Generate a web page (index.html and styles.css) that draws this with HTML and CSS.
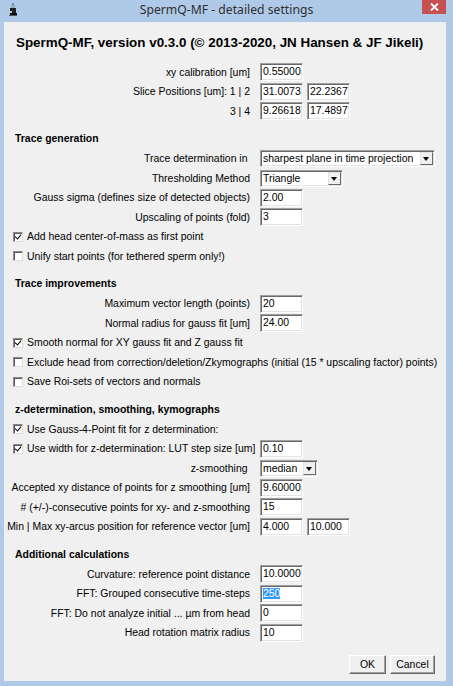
FILE: index.html
```html
<!DOCTYPE html>
<html>
<head>
<meta charset="utf-8">
<link rel="stylesheet" href="styles.css">
</head>
<body>
<div class="window">
  <div class="titlebar">
    <div class="tb-left">
      <svg class="app-icon" width="9" height="14" viewBox="0 0 9 14">
        <rect x="3" y="0" width="2" height="2" fill="#6a8fc0"/>
        <rect x="2" y="2" width="4" height="3" fill="#9aa7b6"/>
        <rect x="1" y="5" width="6" height="3" fill="#222"/>
        <rect x="3" y="8" width="4" height="2" fill="#222"/>
        <rect x="1" y="10" width="7" height="2" fill="#111"/>
        <rect x="0" y="12" width="8" height="1" fill="#555"/>
      </svg>
    </div>
    <div class="tb-title">SpermQ-MF - detailed settings</div>
    <div class="tb-right">
      <div class="close">
        <svg width="9" height="8" viewBox="0 0 9 8"><path d="M1 0.5 L8 7.5 M8 0.5 L1 7.5" stroke="#fff" stroke-width="1.8"/></svg>
      </div>
    </div>
  </div>
  <div class="client">
    <div class="header">SpermQ-MF, version v0.3.0 (© 2013-2020, JN Hansen &amp; JF Jikeli)</div>
    <div class="form">
      <div class="row"><span class="lbl">xy calibration [um]</span><span class="field">0.55000</span></div>
      <div class="row"><span class="lbl">Slice Positions [um]: 1 | 2</span><span class="field">31.0073</span><span class="field">22.2367</span></div>
      <div class="row"><span class="lbl">3 | 4</span><span class="field">9.26618</span><span class="field">17.4897</span></div>

      <div class="section">
        <div class="heading">Trace generation</div>
        <div class="row"><span class="lbl lbl-c">Trace determination in</span><span class="choice w-long"><span class="ctext">sharpest plane in time projection</span><span class="arrow"></span></span></div>
        <div class="row"><span class="lbl">Thresholding Method</span><span class="choice w-mid"><span class="ctext">Triangle</span><span class="arrow"></span></span></div>
        <div class="row"><span class="lbl">Gauss sigma (defines size of detected objects)</span><span class="field">2.00</span></div>
        <div class="row"><span class="lbl">Upscaling of points (fold)</span><span class="field">3</span></div>
        <div class="row"><span class="check on"></span><span class="ctl">Add head center-of-mass as first point</span></div>
        <div class="row"><span class="check"></span><span class="ctl">Unify start points (for tethered sperm only!)</span></div>
      </div>

      <div class="section">
        <div class="heading">Trace improvements</div>
        <div class="row"><span class="lbl">Maximum vector length (points)</span><span class="field">20</span></div>
        <div class="row"><span class="lbl">Normal radius for gauss fit [um]</span><span class="field">24.00</span></div>
        <div class="row"><span class="check on"></span><span class="ctl">Smooth normal for XY gauss fit and Z gauss fit</span></div>
        <div class="row"><span class="check"></span><span class="ctl">Exclude head from correction/deletion/Zkymographs (initial (15 * upscaling factor) points)</span></div>
        <div class="row"><span class="check"></span><span class="ctl">Save Roi-sets of vectors and normals</span></div>
      </div>

      <div class="section">
        <div class="heading">z-determination, smoothing, kymographs</div>
        <div class="row"><span class="check on"></span><span class="ctl">Use Gauss-4-Point fit for z determination:</span></div>
        <div class="row"><span class="lbl lbl-check"><span class="check on"></span><span class="ctl">Use width for z-determination: LUT step size [um]</span></span><span class="field">0.10</span></div>
        <div class="row"><span class="lbl lbl-c">z-smoothing</span><span class="choice w-short"><span class="ctext">median</span><span class="arrow"></span></span></div>
        <div class="row"><span class="lbl">Accepted xy distance of points for z smoothing [um]</span><span class="field">9.60000</span></div>
        <div class="row"><span class="lbl"># (+/-)-consecutive points for xy- and z-smoothing</span><span class="field">15</span></div>
        <div class="row"><span class="lbl">Min | Max xy-arcus position for reference vector [um]</span><span class="field">4.000</span><span class="field">10.000</span></div>
      </div>

      <div class="section">
        <div class="heading">Additional calculations</div>
        <div class="row"><span class="lbl">Curvature: reference point distance</span><span class="field">10.0000</span></div>
        <div class="row"><span class="lbl">FFT: Grouped consecutive time-steps</span><span class="field"><span class="sel">250</span></span></div>
        <div class="row"><span class="lbl">FFT: Do not analyze initial ... µm from head</span><span class="field">0</span></div>
        <div class="row"><span class="lbl">Head rotation matrix radius</span><span class="field">10</span></div>
      </div>
    </div>
    <div class="buttons">
      <span class="btn btn-ok">OK</span>
      <span class="btn btn-cancel">Cancel</span>
    </div>
  </div>
</div>
</body>
</html>
```

FILE: styles.css
```css
html, body {
  margin: 0;
  padding: 0;
}
body {
  width: 453px;
  height: 686px;
  overflow: hidden;
  font-family: "Liberation Sans", Arial, sans-serif;
  font-size: 10.45px;
  color: #000;
}
.window {
  width: 453px;
  height: 686px;
  background: #aecae8;
  display: flex;
  flex-direction: column;
}
.titlebar {
  height: 22px;
  display: grid;
  grid-template-columns: 1fr auto 1fr;
  align-items: start;
}
.tb-left {
  padding: 3px 0 0 9px;
}
.app-icon {
  display: block;
}
.tb-title {
  font-family: "Noto Sans", "Open Sans", sans-serif;
  font-size: 12.2px;
  line-height: 19px;
  color: #2e2e2e;
}
.tb-right {
  display: flex;
  justify-content: flex-end;
  padding-right: 7px;
}
.close {
  width: 24px;
  height: 14px;
  background: #c75050;
  display: flex;
  align-items: center;
  justify-content: center;
}
.client {
  flex: 1;
  margin: 0 7px 5px 4px;
  background: #f0f0f0;
  display: flex;
  flex-direction: column;
}
.header {
  margin-top: 11px;
  height: 20px;
  line-height: 20px;
  padding-left: 12px;
  font-weight: bold;
  font-size: 13.4px;
}
.form {
  padding-top: 9.25px;
}
.row {
  height: 19.5px;
  display: flex;
  align-items: center;
}
.lbl {
  width: 246px;
  flex: none;
  text-align: right;
  margin-right: 10px;
  white-space: nowrap;
}
.lbl-c {
  width: 243.5px;
  margin-right: 12.5px;
}
.lbl-check {
  display: flex;
  align-items: center;
  text-align: left;
}
.section {
  margin-top: 8.5px;
}
.heading {
  height: 19.5px;
  line-height: 19.5px;
  padding-left: 11px;
  font-weight: bold;
}
.field {
  box-sizing: border-box;
  width: 43px;
  height: 18px;
  margin-right: 4px;
  background: #fff;
  border: 1px solid;
  border-color: #a0a0a0 #fff #fff #a0a0a0;
  box-shadow: inset 1px 1px 0 #696969, inset -1px -1px 0 #e3e3e3;
  padding-left: 2px;
  line-height: 15px;
  white-space: nowrap;
  overflow: hidden;
}
.sel {
  background: #3399ff;
  color: #fff;
}
.choice {
  box-sizing: border-box;
  height: 17px;
  background: #fff;
  border: 1px solid;
  border-color: #a0a0a0 #fff #fff #a0a0a0;
  box-shadow: inset 1px 1px 0 #696969, inset -1px -1px 0 #e3e3e3;
  display: flex;
  align-items: center;
  justify-content: space-between;
  padding: 0 1px 0 2px;
  white-space: nowrap;
}
.w-long { width: 175px; }
.w-mid { width: 83px; }
.w-short { width: 58px; }
.arrow {
  box-sizing: border-box;
  width: 13px;
  height: 13px;
  background: #f0f0f0;
  border: 1px solid;
  border-color: #e3e3e3 #696969 #696969 #e3e3e3;
  position: relative;
}
.arrow::after {
  content: "";
  position: absolute;
  left: 2px;
  top: 4px;
  border-left: 3.5px solid transparent;
  border-right: 3.5px solid transparent;
  border-top: 4px solid #000;
}
.check {
  box-sizing: border-box;
  flex: none;
  width: 10px;
  height: 10px;
  margin-left: 9px;
  margin-right: 4px;
  background: #fff;
  border: 1px solid;
  border-color: #8a8a8a #dcdcdc #dcdcdc #8a8a8a;
  box-shadow: inset 1px 1px 0 #5a5a5a;
  position: relative;
}
.check.on::after {
  content: "";
  position: absolute;
  left: 1px;
  top: 0px;
  width: 3px;
  height: 5px;
  border-right: 1.6px solid #000;
  border-bottom: 1.6px solid #000;
  transform: translate(1px, 0) rotate(40deg);
}
.ctl {
  white-space: nowrap;
}
.buttons {
  margin-top: 12.75px;
  display: flex;
  justify-content: flex-end;
  gap: 4px;
  padding-right: 11px;
}
.btn {
  box-sizing: border-box;
  height: 19px;
  display: flex;
  align-items: center;
  justify-content: center;
  background: #f0f0f0;
  border: 1px solid;
  border-color: #fff #696969 #696969 #fff;
  box-shadow: inset -1px -1px 0 #a0a0a0;
}
.btn-ok { width: 37px; }
.btn-cancel { width: 45px; }
```
